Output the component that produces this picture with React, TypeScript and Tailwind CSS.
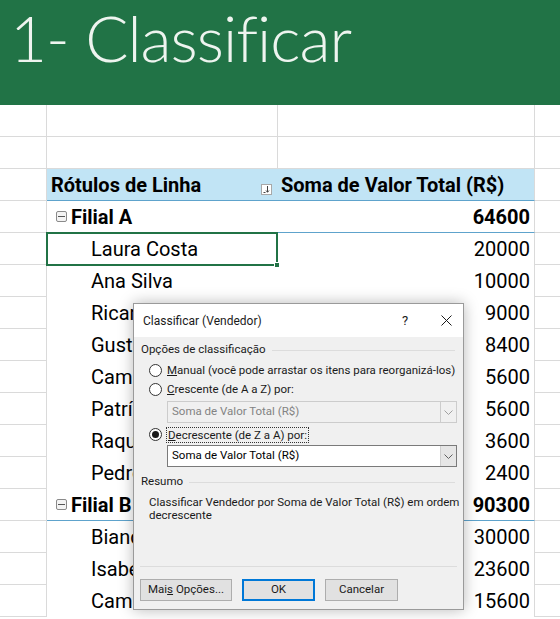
import React from 'react'

type Row = { label: string; value: string; group?: boolean; selected?: boolean }

const rows: Row[] = [
  { label: 'Filial A', value: '64600', group: true },
  { label: 'Laura Costa', value: '20000', selected: true },
  { label: 'Ana Silva', value: '10000' },
  { label: 'Ricardo Alves', value: '9000' },
  { label: 'Gustavo Lima', value: '8400' },
  { label: 'Camila Rocha', value: '5600' },
  { label: 'Patrícia Souza', value: '5600' },
  { label: 'Raquel Dias', value: '3600' },
  { label: 'Pedro Santos', value: '2400' },
  { label: 'Filial B', value: '90300', group: true },
  { label: 'Bianca Melo', value: '30000' },
  { label: 'Isabela Nunes', value: '23600' },
  { label: 'Camilo Ferreira', value: '15600' },
]

const cellFont = { fontFamily: 'Roboto, "Liberation Sans", sans-serif' }
const uiFont = { fontFamily: 'Roboto, "Liberation Sans", sans-serif' }

function EmptyRow() {
  return (
    <div className="flex h-[32px]">
      <div className="w-[47px] border-r border-b border-[#dadada]" />
      <div className="w-[231px] border-r border-b border-[#dadada]" />
      <div className="w-[257px] border-r border-b border-[#dadada]" />
      <div className="flex-1 border-b border-[#dadada]" />
    </div>
  )
}

function CollapseBox() {
  return (
    <span className="mr-[4px] flex h-[11px] w-[11px] items-center justify-center rounded-[2px] border border-[#8a8a8a] bg-[#f3f3f3]">
      <span className="h-px w-[7px] bg-[#555]" />
    </span>
  )
}

function PivotRow({ row }: { row: Row }) {
  const line = row.group ? 'border-b border-[#5ea3cc]' : ''
  return (
    <div className="flex h-[32px]">
      <div className="w-[47px] border-r border-b border-[#dadada]" />
      <div className={`relative flex w-[488px] items-center border-r border-r-[#dadada] ${line}`}>
        {row.group ? (
          <div className="flex w-[231px] items-center pl-[9px] text-[20px] font-bold text-black">
            <CollapseBox />
            {row.label}
          </div>
        ) : (
          <div className="w-[231px] pl-[44px] text-[20px] text-black">{row.label}</div>
        )}
        <div className={`flex-1 pr-[4px] text-right text-[20px] text-black ${row.group ? 'font-bold' : ''}`}>
          {row.value}
        </div>
        {row.selected && (
          <div className="absolute left-[-1px] top-[-1px] h-[34px] w-[232px] border-2 border-[#217346]">
            <span className="absolute bottom-[-4px] right-[-4px] h-[6px] w-[6px] border border-white bg-[#217346]" />
          </div>
        )}
      </div>
      <div className="flex-1 border-b border-[#dadada]" />
    </div>
  )
}

function Radio({ checked }: { checked?: boolean }) {
  return (
    <span className="flex h-[13px] w-[13px] shrink-0 items-center justify-center rounded-full border border-[#333] bg-white">
      {checked && <span className="h-[7px] w-[7px] rounded-full bg-[#1a1a1a]" />}
    </span>
  )
}

function Combo({ disabled }: { disabled?: boolean }) {
  return (
    <div
      className={`ml-[33px] flex h-[22px] w-[290px] items-center border ${
        disabled ? 'border-[#cccccc] bg-[#f0f0f0] text-[#838383]' : 'border-[#7a7a7a] bg-white text-black'
      }`}
    >
      <span className="flex-1 pl-[4px]">Soma de Valor Total (R$)</span>
      <span
        className={`flex h-full w-[16px] items-center justify-center border-l ${
          disabled ? 'border-[#cccccc] bg-[#f0f0f0]' : 'border-[#cfcfcf] bg-[#e6e6e6]'
        }`}
      >
        <svg width="9" height="5" viewBox="0 0 9 5" fill="none">
          <path d="M0.5 0.5 L4.5 4.5 L8.5 0.5" stroke={disabled ? '#a0a0a0' : '#606060'} strokeWidth="1" />
        </svg>
      </span>
    </div>
  )
}

function SectionTitle({ text }: { text: string }) {
  return (
    <div className="flex h-[16px] items-center pl-[7px] pr-[8px]">
      <span className="mr-[6px] text-[#1a1a1a]">{text}</span>
      <span className="h-px flex-1 bg-[#dcdcdc]" />
    </div>
  )
}

function SortDialog() {
  return (
    <div
      className="absolute left-[133px] top-[303px] flex h-[307px] w-[331px] flex-col whitespace-nowrap border border-[#9a9a9a] bg-[#f0f0f0] text-[11.5px] shadow-[0_0_14px_rgba(0,0,0,0.28)]"
      style={uiFont}
    >
      <div className="flex h-[33px] shrink-0 items-center bg-white pl-[9px] text-[12px] text-[#1a1a1a]">
        <span className="flex-1">Classificar (Vendedor)</span>
        <span className="w-[20px] text-center text-[13px]">?</span>
        <span className="ml-[23px] mr-[9px] flex w-[16px] justify-center">
          <svg width="11" height="11" viewBox="0 0 11 11">
            <path d="M0.5 0.5 L10.5 10.5 M10.5 0.5 L0.5 10.5" stroke="#1a1a1a" strokeWidth="1" />
          </svg>
        </span>
      </div>

      <div className="mt-[5px]">
        <SectionTitle text="Opções de classificação" />
      </div>

      <div className="mt-[3px] flex h-[19px] items-center pl-[15px] text-[#1a1a1a]">
        <Radio />
        <span className="ml-[5px] block first-letter:underline">
          Manual (você pode arrastar os itens para reorganizá-los)
        </span>
      </div>
      <div className="flex h-[19px] items-center pl-[15px] text-[#1a1a1a]">
        <Radio />
        <span className="ml-[5px] block first-letter:underline">Crescente (de A a Z) por:</span>
      </div>
      <div className="mt-[2px]">
        <Combo disabled />
      </div>
      <div className="mt-[2px] flex h-[19px] items-center pl-[15px] text-[#1a1a1a]">
        <Radio checked />
        <span className="ml-[4px] block border border-dotted border-[#333] px-px leading-[14px] first-letter:underline">
          Decrescente (de Z a A) por:
        </span>
      </div>
      <div className="mt-px">
        <Combo />
      </div>

      <div className="mt-[7px]">
        <SectionTitle text="Resumo" />
      </div>
      <div className="mt-[6px] pl-[15px] leading-[13px] text-[#1a1a1a]">
        Classificar Vendedor por Soma de Valor Total (R$) em ordem
        <br />
        decrescente
      </div>

      <div className="mx-[6px] mt-auto h-px bg-[#dcdcdc]" />
      <div className="mb-[8px] mt-[12px] flex gap-[10px] pl-[6px] text-[#1a1a1a]">
        <button className="h-[22px] w-[92px] border border-[#adadad] bg-[#e1e1e1]">
          Mai<span className="underline">s</span> Opções...
        </button>
        <button className="h-[22px] w-[73px] border-2 border-[#0078d7] bg-[#e1e1e1]">OK</button>
        <button className="h-[22px] w-[73px] border border-[#adadad] bg-[#e1e1e1]">Cancelar</button>
      </div>
    </div>
  )
}

export default function App() {
  return (
    <div className="relative h-[619px] w-[560px] overflow-hidden bg-white" style={cellFont}>
      <header className="h-[105px] bg-[#217346] pl-[10px] pt-[2px]">
        <h1
          className="text-[64px] font-light leading-[72px] tracking-[-1px] text-[#eef4ef]"
          style={{ fontFamily: 'Lato, "DejaVu Sans", sans-serif' }}
        >
          1- Classificar
        </h1>
      </header>

      <EmptyRow />
      <EmptyRow />

      {/* pivot table header */}
      <div className="flex h-[32px]">
        <div className="w-[47px] border-r border-b border-[#dadada]" />
        <div className="flex w-[488px] items-center border-r border-b border-r-[#dadada] border-b-[#5ea3cc] bg-[#c1e4f5] text-[20px] font-bold text-black">
          <div className="flex w-[231px] items-center pl-[4px]">
            <span className="flex-1">Rótulos de Linha</span>
            <span className="mr-[6px] mt-[10px] flex h-[11px] w-[11px] items-end justify-center border border-[#a8a8a8] bg-white pb-px">
              <svg width="7" height="7" viewBox="0 0 7 7">
                <path d="M0.5 6.5 H2.5 M4.5 0 V6 M3 4.5 L4.5 6.3 L6 4.5" stroke="#444" strokeWidth="1" fill="none" />
              </svg>
            </span>
          </div>
          <span className="pl-[3px]">Soma de Valor Total (R$)</span>
        </div>
        <div className="flex-1 border-b border-[#dadada]" />
      </div>

      {rows.map((r) => (
        <PivotRow key={r.label} row={r} />
      ))}

      <SortDialog />
    </div>
  )
}
